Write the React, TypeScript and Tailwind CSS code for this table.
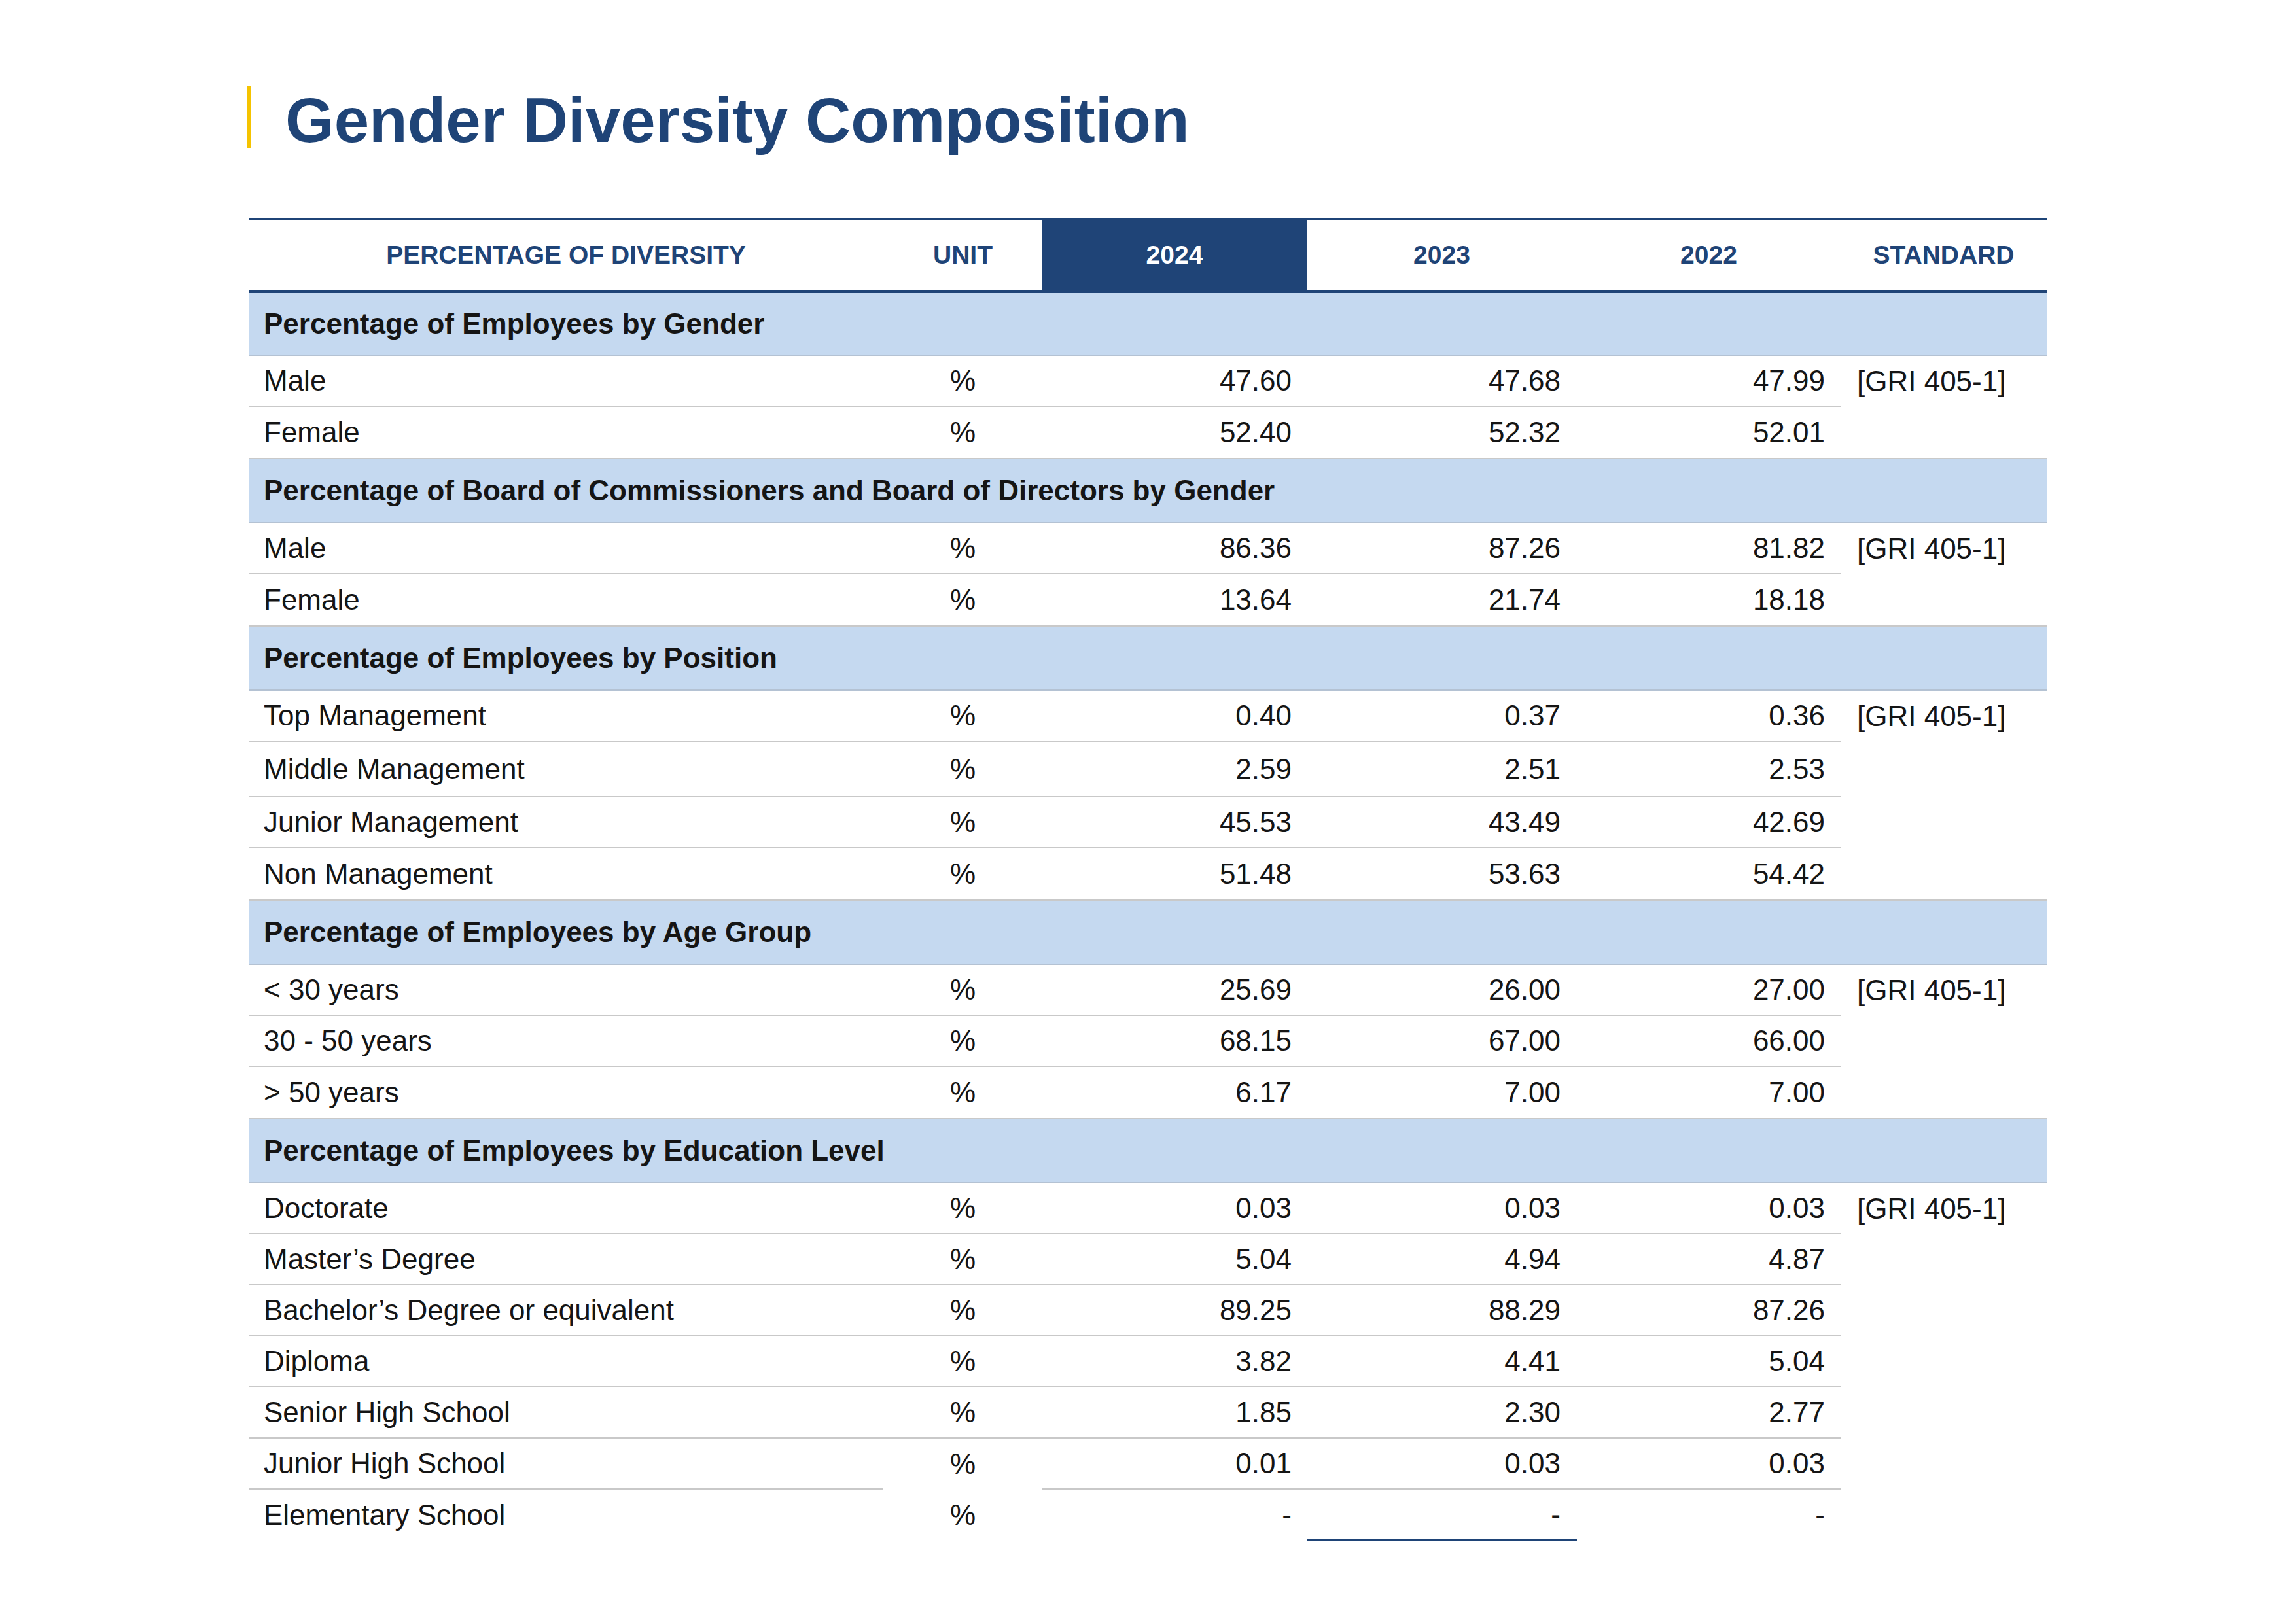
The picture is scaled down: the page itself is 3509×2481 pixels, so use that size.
type Row = {
  label: string;
  v24: string;
  v23: string;
  v22: string;
  std?: string;
  tall?: boolean;
  noUnitLine?: boolean;
  last?: boolean;
};

type Section = { title: string; rows: Row[] };

const GRI = "[GRI 405-1]";

const SECTIONS: Section[] = [
  {
    title: "Percentage of Employees by Gender",
    rows: [
      { label: "Male", v24: "47.60", v23: "47.68", v22: "47.99", std: GRI },
      { label: "Female", v24: "52.40", v23: "52.32", v22: "52.01" },
    ],
  },
  {
    title: "Percentage of Board of Commissioners and Board of Directors by Gender",
    rows: [
      { label: "Male", v24: "86.36", v23: "87.26", v22: "81.82", std: GRI },
      { label: "Female", v24: "13.64", v23: "21.74", v22: "18.18" },
    ],
  },
  {
    title: "Percentage of Employees by Position",
    rows: [
      { label: "Top Management", v24: "0.40", v23: "0.37", v22: "0.36", std: GRI },
      { label: "Middle Management", v24: "2.59", v23: "2.51", v22: "2.53", tall: true },
      { label: "Junior Management", v24: "45.53", v23: "43.49", v22: "42.69" },
      { label: "Non Management", v24: "51.48", v23: "53.63", v22: "54.42" },
    ],
  },
  {
    title: "Percentage of Employees by Age Group",
    rows: [
      { label: "< 30 years", v24: "25.69", v23: "26.00", v22: "27.00", std: GRI },
      { label: "30 - 50 years", v24: "68.15", v23: "67.00", v22: "66.00" },
      { label: "> 50 years", v24: "6.17", v23: "7.00", v22: "7.00" },
    ],
  },
  {
    title: "Percentage of Employees by Education Level",
    rows: [
      { label: "Doctorate", v24: "0.03", v23: "0.03", v22: "0.03", std: GRI },
      { label: "Master\u2019s Degree", v24: "5.04", v23: "4.94", v22: "4.87" },
      { label: "Bachelor\u2019s Degree or equivalent", v24: "89.25", v23: "88.29", v22: "87.26" },
      { label: "Diploma", v24: "3.82", v23: "4.41", v22: "5.04" },
      { label: "Senior High School", v24: "1.85", v23: "2.30", v22: "2.77" },
      { label: "Junior High School", v24: "0.01", v23: "0.03", v22: "0.03", noUnitLine: true },
      { label: "Elementary School", v24: "-", v23: "-", v22: "-", last: true },
    ],
  },
];

function DataRow({ row, endOfGroup }: { row: Row; endOfGroup: boolean }) {
  const h = row.tall ? "h-[85px]" : "h-[78px]";
  const line = row.last || endOfGroup ? "" : "border-b-2 border-[#c9c9c9]";
  return (
    <>
      <div className={`${h} ${line} flex items-center pl-[23px]`}>{row.label}</div>
      <div
        className={`${h} ${row.noUnitLine ? "" : line} flex items-center justify-center`}
      >
        %
      </div>
      <div className={`${h} ${line} flex items-center justify-end pr-[23px]`}>{row.v24}</div>
      <div
        className={`${h} ${
          row.last ? "border-b-[3px] border-[#1f4477]" : line
        } flex items-center justify-end pr-[25px]`}
      >
        {row.v23}
      </div>
      <div className={`${h} ${line} flex items-center justify-end pr-[24px]`}>{row.v22}</div>
      <div className={`${h} flex items-center pl-[25px]`}>{row.std ?? ""}</div>
    </>
  );
}

export default function App() {
  return (
    <div
      className="min-h-[2481px] w-[3509px] bg-white pt-[132px] pl-[377px] text-[#151515]"
      style={{ fontFamily: '"Liberation Sans", Arial, sans-serif' }}
    >
      <div className="flex items-start">
        <div className="h-[94px] w-[7px] bg-[#f5c300]" />
        <h1 className="ml-[52px] mt-[4px] text-[96px] font-bold leading-none text-[#1f4477]">
          Gender Diversity Composition
        </h1>
      </div>

      <div className="ml-[3px] mt-[101px] grid w-[2748px] grid-cols-[970px_243px_404px_413px_403px_315px] text-[44px]">
        {/* header */}
        <div className="col-span-6 grid h-[115px] grid-cols-[970px_243px_404px_413px_403px_315px] border-y-4 border-[#1f4477] text-[39px] font-bold text-[#1f4477]">
          <div className="flex items-center justify-center">PERCENTAGE OF DIVERSITY</div>
          <div className="flex items-center justify-center">UNIT</div>
          <div className="flex items-center justify-center bg-[#1f4477] text-white">2024</div>
          <div className="flex items-center justify-center">2023</div>
          <div className="flex items-center justify-center">2022</div>
          <div className="flex items-center justify-center">STANDARD</div>
        </div>

        {SECTIONS.map((s, si) => (
          <div key={s.title} className="contents">
            <div
              className={`col-span-6 flex items-center border-b-2 border-[#b4c2d3] bg-[#c5d9f0] pl-[23px] font-bold ${
                si === 0 ? "h-[96px]" : "h-[100px] border-t-2 border-t-[#c9c9c9]"
              }`}
            >
              {s.title}
            </div>
            {s.rows.map((r, ri) => (
              <DataRow
                key={s.title + r.label}
                row={r}
                endOfGroup={ri === s.rows.length - 1 && si < SECTIONS.length - 1}
              />
            ))}
          </div>
        ))}
      </div>
    </div>
  );
}
